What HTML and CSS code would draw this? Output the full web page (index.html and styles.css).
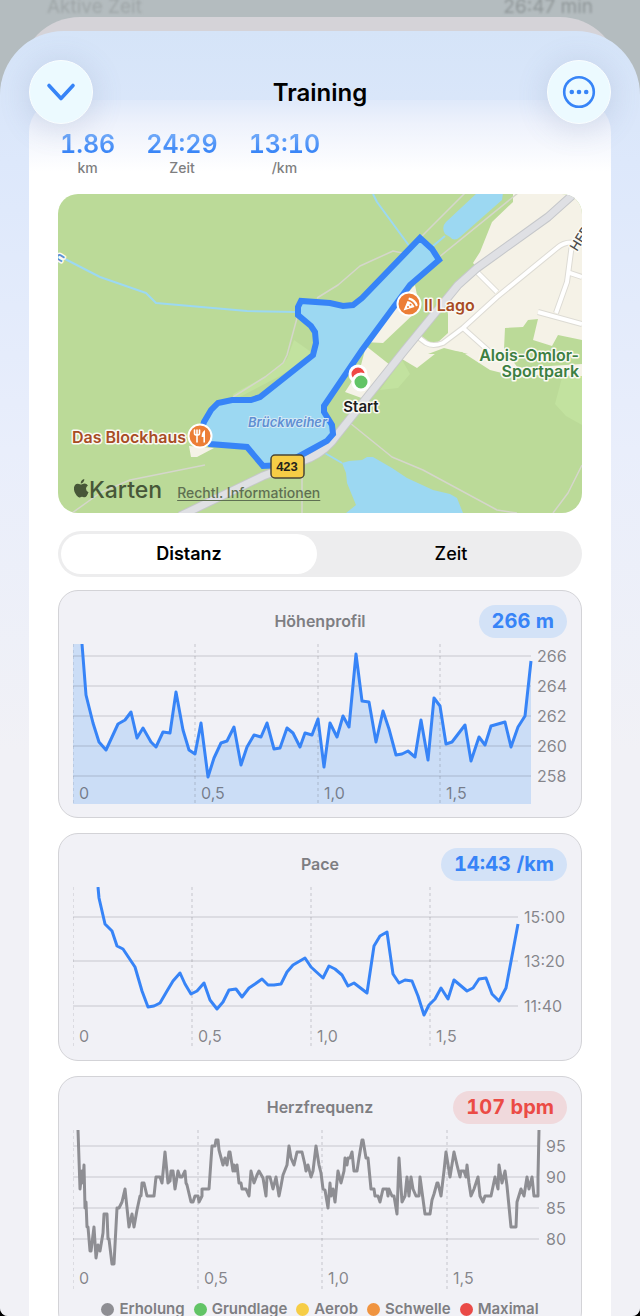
FILE: index.html
```html
<!DOCTYPE html>
<html lang="de">
<head>
  <meta charset="UTF-8" />
  <meta name="viewport" content="width=device-width, initial-scale=1.0" />
  <title>Training</title>
  <link rel="stylesheet" href="styles.css">
</head>
<body>
  <div class="backdrop" aria-hidden="true">
    <span>Aktive Zeit</span>
    <span>26:47 min</span>
  </div>
  <div class="back-sheet"></div>

  <main class="sheet">
    <header class="topbar">
      <button class="round-btn" aria-label="Schließen">
        <svg width="32" height="32" viewBox="0 0 32 32"><path d="M4 9.500 16 22.500 28 9.500" fill="none" stroke="#3784f7" stroke-width="3.600" stroke-linecap="round" stroke-linejoin="round"/></svg>
      </button>
      <h1>Training</h1>
      <button class="round-btn" aria-label="Mehr">
        <svg width="34" height="34" viewBox="0 0 34 34" fill="#3784f7"><circle cx="17" cy="17" r="14.800" fill="none" stroke="#3784f7" stroke-width="2.600"/><circle cx="9.800" cy="17" r="2.300"/><circle cx="17" cy="17" r="2.300"/><circle cx="24.200" cy="17" r="2.300"/></svg>
      </button>
    </header>

    <section class="panel">
      <div class="stats">
        <div class="stat"><strong>1.86</strong><span>km</span></div>
        <div class="stat"><strong>24:29</strong><span>Zeit</span></div>
        <div class="stat"><strong>13:10</strong><span>/km</span></div>
      </div>

      <div class="map">
        <svg viewBox="0 0 524 319">
          <rect width="524" height="319" fill="#bbda98"/>
          <!-- lighter meadows -->
          <path class="meadow" d="M236 146 256 160 222 182 176 206 175 200 208 182 229 165ZM344 166 332 182 322 196 340 194 352 180ZM524 160 505 180 497 210 508 222 524 231Z"/>
          <!-- built-up areas -->
          <path class="town" d="M455 0H524V182L470 181 452 181 432 176 404 158 382 156 359 174 344 165 352 152 390 119V100L419 74 415 69 422 58 434 28 455 8Z"/>
          <path class="town" d="M357 91 359 101 362 114 325 149 306 148 318 132ZM308 152 332 171 309 206 287 198 302 175ZM131 252 133 263 139 263 156 254Z"/>
          <path fill="#bbda98" d="M390 119V139L378 150 366 148 355 138ZM447 134 465 133 470 126 480 125 475 146 494 152 500 141 524 146V170L460 174 446 155ZM370 160 386 154 410 160Z"/>
          <!-- footpaths -->
          <path class="path" d="M259 104 280 91 302 72 335 57 354 61M362 44 407-1M380 64 460-1M239 124 229 161 225 169 207 183 175 203M147 271 72 286 42 299 14 319M244 280V319M292 229 334 263 365 276 439 316 459 319M495 319 510 299 524 271"/>
          <!-- streams -->
          <path class="stream" d="M7 65 42 83 88 99 98 109 189 117 239 118M315 0 319 8 352 53M375 52 387 42M265 258 284 269"/>
          <!-- streets -->
          <path class="street-edge" d="M360 143 368 149Q375 153 385 149L405 134 439 103 499 54Q507 47 518 49M419 78 439 98M405 134 433 159M514 50 509 88 498 119M480 118 524 130M509 78 524 83"/>
          <path class="street" d="M360 143 368 149Q375 153 385 149L405 134 439 103 499 54Q507 47 518 49M419 78 439 98M405 134 433 159M514 50 509 88 498 119M480 118 524 130M509 78 524 83"/>
          <path class="road-edge" d="M518-2 490 23 419 74 400 91 346 157 279 241Q269 256 252 264L205 282 122 322"/>
          <path class="road" d="M518-2 490 23 419 74 400 91 346 157 279 241Q269 256 252 264L205 282 122 322"/>
          <!-- water -->
          <path class="water" d="M419-1H445L444 6 402 43Q396 48 392 43L387 40Q383 33 388 28ZM284 269 291 267 304 266 309 263H315L334 274 349 284 375 296 392 300 399 304 405 319H288L298 311 289 289 288 279Z"/>
          <path class="route" d="M362 44 374 55 381 66 352 91 304 156 266 212V218L274 231 275 240 269 247 247 259 225 271 205 272 189 253 152 250 142 242 146 228 153 216 160 209 174 206 193 206 202 203 255 161 258 149 257 138 253 132 240 121V113L243 107 272 109 285 112 295 111 304 104Z"/>
          <!-- start and finish -->
          <circle cx="300" cy="180" r="8" fill="#ef4945" stroke="#fff" stroke-width="3"/>
          <circle cx="303" cy="188" r="8" fill="#62c466" stroke="#fff" stroke-width="3"/>
          <!-- restaurants -->
          <g stroke="#fff" stroke-width="2">
            <circle cx="351" cy="110" r="11.500" fill="#ec7e36"/>
            <circle cx="142" cy="242" r="11.500" fill="#ec7e36"/>
          </g>
          <path fill="#fff" d="M345.500 116.500 349.500 107Q354.500 108 356.500 113ZM350.300 105.500 351 103.500Q358 105 359.800 111.500L358 112.500Q356.200 107 350.300 105.500Z"/>
          <circle cx="350" cy="113" r="1" fill="#ec7e36"/><circle cx="352.500" cy="110.800" r="1" fill="#ec7e36"/>
          <path d="M136.500 236V239.500Q136.500 241 139 241M139 236V248M141.500 236V239.500Q141.500 241 139 241" fill="none" stroke="#fff" stroke-width="1.600" stroke-linecap="round"/>
          <path fill="#fff" d="M147 236V248.500H145.400V243H143.600Q143.500 238 147 236Z"/>
          <rect x="213" y="261" width="33" height="23" rx="4" fill="#f6cd46" stroke="#4a4637" stroke-width="1.500"/>
          <g class="labels">
            <text class="food" x="14" y="249">Das Blockhaus</text>
            <text class="food" x="366" y="117">Il Lago</text>
            <text class="park" x="521" y="167" text-anchor="end">Alois-Omlor-</text>
            <text class="park" x="521" y="183" text-anchor="end">Sportpark</text>
            <text class="start" x="303" y="218" text-anchor="middle">Start</text>
            <text class="street-name" transform="translate(519 58) rotate(-58)">HER</text>
            <text class="stream-name" transform="translate(3 69) rotate(-58)">h</text>
          </g>
          <text class="lake" x="190" y="233">Brückweiher</text>
          <text class="road-no" x="229" y="277" text-anchor="middle">423</text>
        </svg>
        <div class="map-credit">
          <span class="brand">
            <svg width="16" height="19" viewBox="0 0 16 19" fill="#475738"><path d="M11.300 0Q11.500 2 10.200 3.300 9 4.600 7.700 4.500 7.600 2.700 8.700 1.500 9.800.300 11.300 0ZM14.900 6.500Q13 7.700 13 9.800 13.100 12.300 15.500 13.300 14.900 15.200 13.700 16.900 12.700 18.300 11.500 18.300 10.800 18.300 10 17.900 9 17.500 8 17.900 6.900 18.400 6.200 18.400 5 18.400 3.600 16.600.500 12.300 1 8.500 1.600 5 4.700 4.700 5.700 4.600 7 5.200 8 5.600 9 5.200 10.500 4.600 11.600 4.600 13.700 4.700 14.900 6.500Z"/></svg>Karten
          </span>
          <a href="#legal">Rechtl. Informationen</a>
        </div>
      </div>

      <div class="segmented" role="radiogroup" aria-label="Achse">
        <label><input type="radio" name="axis" checked><span>Distanz</span></label>
        <label><input type="radio" name="axis"><span>Zeit</span></label>
      </div>

      <article class="card">
        <div class="card-head">
          <h2>Höhenprofil</h2>
          <span class="badge">266 m</span>
        </div>
        <svg class="chart" viewBox="0 0 494 160">
          <path class="area" d="M0 0H9L13 51 20 79 26 98 33 106 39 93 45 80 52 76 58 68 64 94 70 84 78 98 83 103 90 88 97 89 103 48 110 86 116 106 122 110 128 79 135 133 141 114 148 99 154 97 161 83 168 121 174 103 181 91 188 93 194 79 201 105 207 104 214 84 220 89 227 103 232 89 239 91 245 75 251 123 257 79 264 93 270 72 276 83 283 10 289 57 296 58 303 98 310 67 316 85 323 111 329 110 335 107 342 113 348 76 355 116 361 54 367 62 373 100 379 98 392 81 398 117 406 93 412 101 418 82 432 78 438 103 445 83 452 72 458 17V160H0Z"/>
          <path class="grid" d="M0 12H458M0 42H458M0 72H458M0 102H458M0 132H458"/>
          <path class="ticks" d="M0 0V160M122 0V160M245 0V160M367 0V160"/>
          <polyline class="line" points="9,0 13,51 20,79 26,98 33,106 39,93 45,80 52,76 58,68 64,94 70,84 78,98 83,103 90,88 97,89 103,48 110,86 116,106 122,110 128,79 135,133 141,114 148,99 154,97 161,83 168,121 174,103 181,91 188,93 194,79 201,105 207,104 214,84 220,89 227,103 232,89 239,91 245,75 251,123 257,79 264,93 270,72 276,83 283,10 289,57 296,58 303,98 310,67 316,85 323,111 329,110 335,107 342,113 348,76 355,116 361,54 367,62 373,100 379,98 392,81 398,117 406,93 412,101 418,82 432,78 438,103 445,83 452,72 458,17"/>
          <g class="axis">
            <text x="6" y="155">0</text><text x="128" y="155">0,5</text><text x="251" y="155">1,0</text><text x="373" y="155">1,5</text>
            <text x="464" y="18">266</text><text x="464" y="48">264</text><text x="464" y="78">262</text><text x="464" y="108">260</text><text x="464" y="138">258</text>
          </g>
        </svg>
      </article>

      <article class="card">
        <div class="card-head">
          <h2>Pace</h2>
          <span class="badge">14:43 /km</span>
        </div>
        <svg class="chart" viewBox="0 0 494 160">
          <path class="grid" d="M0 30H445M0 74H445M0 119H445"/>
          <path class="ticks" d="M0 0V160M119 0V160M238 0V160M357 0V160"/>
          <polyline class="line" points="25,0 26,11 32,37 39,44 44,59 50,62 56,71 62,80 69,104 75,120 81,119 87,116 94,104 100,94 107,86 112,97 118,107 124,104 131,96 137,113 144,122 150,115 156,103 163,102 169,110 176,101 182,97 189,92 195,98 201,98 208,97 214,85 220,78 232,71 238,80 250,91 256,79 262,82 269,88 275,99 281,96 294,106 301,59 307,49 314,45 320,87 326,96 332,93 339,94 345,109 351,128 356,118 362,112 368,101 375,112 381,93 394,104 400,101 406,92 413,91 419,107 426,114 433,101 445,37"/>
          <g class="axis">
            <text x="6" y="155">0</text><text x="125" y="155">0,5</text><text x="244" y="155">1,0</text><text x="363" y="155">1,5</text>
            <text x="451" y="36">15:00</text><text x="451" y="80">13:20</text><text x="451" y="125">11:40</text>
          </g>
        </svg>
      </article>

      <article class="card">
        <div class="card-head">
          <h2>Herzfrequenz</h2>
          <span class="badge badge-red">107 bpm</span>
        </div>
        <svg class="chart" viewBox="0 0 494 160">
          <path class="grid" d="M0 16H466M0 47H466M0 78H466M0 109H466"/>
          <path class="ticks" d="M0 0V160M125 0V160M249 0V160M374 0V160"/>
          <polyline class="line line-gray" points="5,0 7,59 9,41 10,53 11,35 12,78 13,72 14,97 15,97 17,121 18,121 21,97 23,128 25,115 27,121 29,109 30,103 31,84 34,84 35,109 36,109 39,134 41,134 42,115 44,78 46,78 49,72 52,59 54,78 56,97 59,84 61,97 64,80 67,66 68,66 69,53 71,53 74,66 81,66 83,47 87,47 89,53 92,22 95,53 97,51 98,41 100,41 102,59 105,41 107,47 109,47 112,41 113,53 114,55 118,72 120,72 122,66 125,66 126,72 129,66 129,59 136,59 139,16 142,16 143,10 145,10 146,20 150,35 152,28 154,35 156,22 157,22 160,41 161,35 162,41 164,35 166,53 168,53 169,59 173,59 176,66 178,41 181,53 184,45 186,41 190,48 193,66 194,47 197,47 200,59 203,47 206,66 208,56 210,45 214,35 216,16 218,28 221,35 224,22 229,22 232,35 233,41 235,35 238,47 240,41 243,16 246,35 248,43 250,59 252,60 255,78 257,53 258,66 260,59 262,72 265,41 268,53 271,41 272,28 274,35 275,28 277,28 279,22 281,41 284,41 286,28 289,10 290,10 293,28 295,28 298,59 301,59 302,66 305,66 307,72 310,59 314,59 315,66 316,59 319,66 321,66 322,72 324,84 326,28 329,72 332,66 334,47 336,66 338,47 340,59 343,66 346,66 347,47 352,84 357,84 359,70 361,64 364,53 365,53 368,66 371,41 373,22 377,47 381,22 384,35 387,47 388,41 391,41 393,47 394,35 396,53 398,66 401,59 405,47 407,66 410,72 412,66 418,66 422,47 425,59 426,35 429,53 432,41 434,56 438,97 443,97 444,72 448,59 451,66 454,47 456,59 459,47 461,66 465,66 465,47 466,0"/>
          <g class="axis">
            <text x="6" y="154">0</text><text x="131" y="154">0,5</text><text x="255" y="154">1,0</text><text x="380" y="154">1,5</text>
            <text x="473" y="22">95</text><text x="473" y="53">90</text><text x="473" y="84">85</text><text x="473" y="115">80</text>
          </g>
        </svg>
        <ul class="legend">
          <li class="recovery">Erholung</li>
          <li class="base">Grundlage</li>
          <li class="aerobic">Aerob</li>
          <li class="threshold">Schwelle</li>
          <li class="maximum">Maximal</li>
        </ul>
      </article>
    </section>
  </main>
</body>
</html>
```

FILE: styles.css
```css
* {
  box-sizing: border-box;
}
html {
  overflow: hidden;
  background-color: #000;
}
body {
  margin: 0;
  height: 100vh;
  overflow: hidden;
  position: relative;
  border-radius: 0 0 8px 8px;
  font-family: Inter, "Liberation Sans", sans-serif;
  background-color: #b4bcbf;
  color: #000;
}
.backdrop {
  height: 31px;
  padding: 0 47px;
  display: flex;
  justify-content: space-between;
  font-size: 19px;
  line-height: 14px;
  color: #9fa6a8;
  filter: blur(1px);
}
.backdrop span:last-child {
  color: #8f9698;
}
.back-sheet {
  position: absolute;
  top: 17px;
  left: 20px;
  right: 20px;
  height: 130px;
  border-radius: 60px;
  background-color: #d5d3d8;
}
.sheet {
  position: relative;
  padding: 69px 29px 0;
  border-radius: 64px 64px 0 0;
  background: linear-gradient(#d5e4f8, #dde8fb 130px, #e9eefb 420px, #f1f1f6 720px);
}

/* header */
.topbar {
  position: absolute;
  z-index: 1;
  top: 29px;
  left: 29px;
  right: 29px;
  display: flex;
  align-items: center;
  justify-content: space-between;
}
.topbar h1 {
  margin: 0;
  font-size: 24px;
  font-weight: 600;
}
.round-btn {
  width: 64px;
  height: 64px;
  padding: 0;
  display: flex;
  align-items: center;
  justify-content: center;
  border: 1px solid #fafeff;
  border-radius: 50%;
  background-color: #ecfaff;
  box-shadow: 0 4px 32px rgba(90, 110, 150, 0.2);
  cursor: pointer;
}

.panel {
  padding: 29px 29px 0;
  border-radius: 32px 32px 0 0;
  background: linear-gradient(#dfe9fa, #eef2fc 24px, #fff 72px);
}

/* summary numbers */
.stats {
  display: flex;
  gap: 31px;
  padding: 0 2px;
  margin-bottom: 18px;
}
.stat {
  display: flex;
  flex-direction: column;
  align-items: center;
}
.stat strong {
  font-size: 25px;
  line-height: 30px;
  font-weight: 600;
  font-variant-numeric: tabular-nums;
  color: transparent;
  background: linear-gradient(#7fb3f9, #3784f7 24px);
  background-clip: text;
  -webkit-background-clip: text;
}
.stat span {
  font-size: 14px;
  line-height: 17px;
  font-weight: 500;
  color: #7e7e80;
}

/* map */
.map {
  position: relative;
  border-radius: 20px;
  overflow: hidden;
}
.map > svg {
  display: block;
  width: 100%;
}
.meadow {
  fill: #c2e29f;
}
.town {
  fill: #f5f2e7;
}
.water {
  fill: #9cd8f2;
}
.path, .stream, .street, .street-edge, .road, .road-edge {
  fill: none;
  stroke-linejoin: round;
}
.path {
  stroke: #d5d6cb;
  stroke-width: 1.5px;
}
.stream {
  stroke: #9cd8f2;
  stroke-width: 2px;
}
.street-edge {
  stroke: #dddbd4;
  stroke-width: 6px;
}
.street {
  stroke: #fff;
  stroke-width: 4px;
}
.road-edge {
  stroke: #c5c7ca;
  stroke-width: 9px;
}
.road {
  stroke: #dfe0e4;
  stroke-width: 7px;
}
.route {
  fill: #9cd8f2;
  stroke: #3784f7;
  stroke-width: 6px;
}
.labels text {
  font-size: 16px;
  font-weight: 600;
  paint-order: stroke;
  stroke: #faf9f3;
  stroke-width: 3px;
  stroke-linejoin: round;
}
.food {
  fill: #a84c24;
}
.park {
  fill: #3c7f42;
}
.labels .start {
  font-size: 15px;
  fill: #1d1d1f;
}
.labels .street-name {
  font-size: 13px;
  font-weight: 500;
  fill: #4b4b4b;
}
.labels .stream-name {
  font-size: 13px;
  fill: #5d8fd2;
}
.lake {
  font-size: 13px;
  font-weight: 600;
  font-style: italic;
  fill: #5f8fd3;
  paint-order: stroke;
  stroke: #d3e9f5;
  stroke-width: 2px;
}
.road-no {
  font-family: "Liberation Sans", sans-serif;
  font-size: 13px;
  font-weight: 700;
  fill: #25231b;
}
.map-credit {
  position: absolute;
  left: 15px;
  bottom: 10px;
  display: flex;
  align-items: baseline;
  gap: 15px;
  color: #475738;
}
.brand {
  font-size: 23px;
  line-height: 26px;
  font-weight: 500;
}
.map-credit a {
  font-size: 14px;
  font-weight: 500;
  color: #5f7052;
  text-underline-offset: 2px;
}

/* Distanz / Zeit switch */
.segmented {
  display: grid;
  grid-template-columns: 1fr 1fr;
  gap: 6px;
  margin: 18px 0 13px;
  padding: 3px;
  border-radius: 23px;
  background-color: #ededee;
}
.segmented input {
  position: absolute;
  opacity: 0;
}
.segmented span {
  display: block;
  border-radius: 20px;
  text-align: center;
  font-size: 18px;
  line-height: 40px;
  font-weight: 500;
  cursor: pointer;
}
.segmented input:checked + span {
  background-color: #fff;
  font-weight: 600;
}

/* chart cards */
.card {
  margin-bottom: 15px;
  padding: 14px 14px 13px;
  border: 1px solid #d3d3d7;
  border-radius: 20px;
  background-color: #f1f1f6;
}
.card-head {
  display: grid;
  grid-template-columns: 1fr auto 1fr;
  align-items: center;
  margin-bottom: 6px;
}
.card-head h2 {
  grid-column: 2;
  margin: 0;
  padding-bottom: 2px;
  font-size: 16px;
  font-weight: 600;
  color: #7e7e82;
}
.badge {
  justify-self: end;
  padding: 0 13px;
  border-radius: 17px;
  font-size: 20px;
  line-height: 33px;
  font-weight: 700;
  font-variant-numeric: tabular-nums;
  color: #3784f7;
  background-color: #d3e2f7;
}
.badge-red {
  color: #eb4b45;
  background-color: #f0d9dc;
}
.chart {
  display: block;
  width: 100%;
}
.area {
  fill: #cbddf6;
}
.grid {
  stroke: rgba(60, 60, 67, 0.22);
}
.ticks {
  stroke: rgba(60, 60, 67, 0.24);
  stroke-dasharray: 3 3;
}
.line {
  fill: none;
  stroke: #3784f7;
  stroke-width: 3px;
  stroke-linejoin: round;
}
.line-gray {
  stroke: #8e8e93;
}
.axis {
  font-size: 16px;
  fill: rgba(60, 60, 67, 0.6);
}
.legend {
  display: flex;
  justify-content: center;
  gap: 9px;
  margin: 10px 0 0;
  padding: 0;
  list-style: none;
  font-size: 15px;
  line-height: 18px;
  font-weight: 600;
  color: #7e7e82;
}
.legend li {
  display: flex;
  align-items: center;
  gap: 5px;
}
.legend li::before {
  content: "";
  width: 13px;
  height: 13px;
  border-radius: 50%;
}
.recovery::before {
  background-color: #8e8e93;
}
.base::before {
  background-color: #62c466;
}
.aerobic::before {
  background-color: #f6cd46;
}
.threshold::before {
  background-color: #f09440;
}
.maximum::before {
  background-color: #ea4a47;
}
```
